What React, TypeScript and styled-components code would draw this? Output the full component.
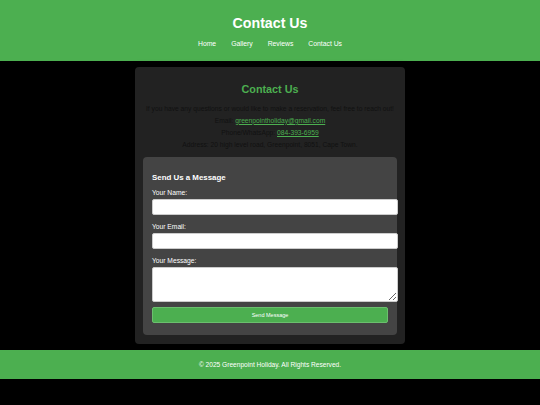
import styled, { createGlobalStyle } from "styled-components"

const Global = createGlobalStyle`
    html, body {
        margin: 0;
        padding: 0;
        background: #000;
        font-family: "Liberation Sans", Arial, sans-serif;
    }
`

const Header = styled.header`
    background-color: #4CAF50;
    color: #fff;
    text-align: center;
    padding: 14px 0 12px;
`

const Title = styled.h1`
    margin: 0 0 7px;
    font-size: 14.2px;
    line-height: 18px;
    font-weight: bold;
`

const Nav = styled.nav`
    display: flex;
    justify-content: center;
    gap: 15px;
    font-size: 6.8px;
    line-height: 10px;
`

const NavLink = styled.a`
    color: #fff;
    text-decoration: none;
`

const Main = styled.main`
    padding: 6px 0;
`

const Container = styled.section`
    width: 254px;
    margin: 0 auto;
    background-color: #222;
    border-radius: 4px;
    padding: 15px 8px 9px;
    text-align: center;
    box-shadow: 0 0 6px rgba(0, 0, 0, .5);
`

const SectionTitle = styled.h2`
    color: #4CAF50;
    margin: 0 0 6.5px;
    font-size: 10.8px;
    line-height: 14px;
`

const Info = styled.p`
    color: #111;
    margin: 0;
    font-size: 6.7px;
    line-height: 12.3px;
    white-space: nowrap;
`

const Link = styled.a`
    color: #4CAF50;
    text-decoration: underline;
`

const FormBox = styled.form`
    margin-top: 5px;
    background-color: #444;
    border-radius: 4px;
    padding: 15px 9px 12px;
    text-align: left;
`

const FormTitle = styled.h3`
    color: #fff;
    margin: 0 0 4.5px;
    font-size: 7.9px;
    line-height: 12px;
`

const Field = styled.div`
    margin-bottom: 7px;
`

const Label = styled.label`
    display: block;
    color: #fff;
    font-size: 6.7px;
    line-height: 9px;
    margin-bottom: 2px;
`

const Input = styled.input`
    display: block;
    width: 100%;
    height: 14px;
    padding: 0 4px;
    border: 1px solid #ccc;
    border-radius: 2px;
    background: #fff;
    margin: 0;
`

const TextArea = styled.textarea`
    display: block;
    width: 100%;
    height: 33px;
    padding: 0 4px;
    border: 1px solid #ccc;
    border-radius: 2px;
    background: #fff;
    margin: 0;
    resize: vertical;
`

const SendButton = styled.button`
    display: block;
    width: 100%;
    height: 16px;
    margin-top: -2px;
    background-color: #4CAF50;
    border: 1px solid #6bbf6e;
    border-radius: 2px;
    color: #fff;
    font-family: "Liberation Sans", Arial, sans-serif;
    font-size: 5.5px;
    padding: 0;
`

const Footer = styled.footer`
    background-color: #4CAF50;
    color: #fff;
    text-align: center;
    font-size: 6.6px;
    line-height: 29px;
`

const App = () => {
    return (
        <>
            <Global />
            <Header>
                <Title>Contact Us</Title>
                <Nav>
                    <NavLink href="#">Home</NavLink>
                    <NavLink href="#">Gallery</NavLink>
                    <NavLink href="#">Reviews</NavLink>
                    <NavLink href="#">Contact Us</NavLink>
                </Nav>
            </Header>
            <Main>
                <Container>
                    <SectionTitle>Contact Us</SectionTitle>
                    <Info>If you have any questions or would like to make a reservation, feel free to reach out!</Info>
                    <Info>Email: <Link href="#">greenpointholiday@gmail.com</Link></Info>
                    <Info>Phone/WhatsApp: <Link href="#">084-393-6959</Link></Info>
                    <Info>Address: 20 high level road, Greenpoint, 8051, Cape Town.</Info>
                    <FormBox onSubmit={e => e.preventDefault()}>
                        <FormTitle>Send Us a Message</FormTitle>
                        <Field>
                            <Label>Your Name:</Label>
                            <Input type="text" />
                        </Field>
                        <Field>
                            <Label>Your Email:</Label>
                            <Input type="email" />
                        </Field>
                        <Field>
                            <Label>Your Message:</Label>
                            <TextArea />
                        </Field>
                        <SendButton type="submit">Send Message</SendButton>
                    </FormBox>
                </Container>
            </Main>
            <Footer>© 2025 Greenpoint Holiday. All Rights Reserved.</Footer>
        </>
    )
}

export default App
